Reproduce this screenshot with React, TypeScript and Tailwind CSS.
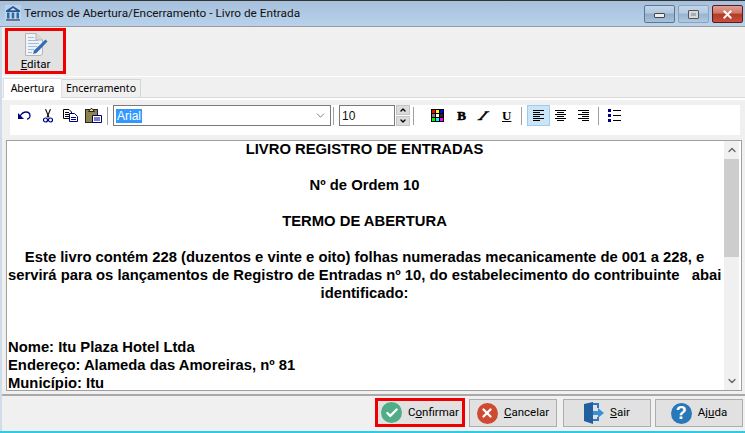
import React from 'react';
import { ChevronDown, ChevronUp, Check, X } from 'lucide-react';

function BankIcon() {
  return (
    <svg width="16" height="17" viewBox="0 0 16 17" className="shrink-0">
      <rect x="0" y="0" width="16" height="17" fill="#c9dcef" opacity="0.6" />
      <path d="M8 1 L15 5.5 V7 H1 V5.5 Z" fill="#235a93" />
      <path d="M8 3 L11 5.3 H5 Z" fill="#d9e6f3" />
      <rect x="2" y="7.5" width="2.5" height="6" fill="#2a6aa6" />
      <rect x="6.7" y="7.5" width="2.5" height="6" fill="#2a6aa6" />
      <rect x="11.5" y="7.5" width="2.5" height="6" fill="#2a6aa6" />
      <rect x="1" y="14" width="14" height="2" fill="#66778c" />
    </svg>
  );
}

function EditIcon() {
  return (
    <svg width="24" height="23" viewBox="0 0 24 23" className="shrink-0">
      <path d="M1.5 0.5 H12 L18.5 7 V20 Q18.5 22.5 16 22.5 H1.5 Z" fill="#f2f2f2" stroke="#b5b5b5" />
      <path d="M12 0.5 V7 H18.5" fill="#d9d9d9" stroke="#b5b5b5" />
      <g stroke="#9dbde3">
        <path d="M4 4.5 H10" />
        <path d="M4 7.5 H14" />
        <path d="M4 10.5 H15" />
        <path d="M4 13.5 H13" />
        <path d="M4 16.5 H10" />
        <path d="M4 19.5 H8" />
      </g>
      <path d="M10 17.5 L21.5 6.5 L23.5 8.5 L12.5 20 L9 21 Z" fill="#2f6db5" />
    </svg>
  );
}

function UndoIcon() {
  return (
    <svg width="13" height="10" viewBox="0 0 13 10" fill="none" className="shrink-0">
      <path d="M0 2 V8 H6 Z" fill="#000080" />
      <path d="M2 5 C4 2 6 1 8 1 C11 1 12 3 12 5 C12 7 10 8 9 8" stroke="#000080" strokeWidth="1.3" />
    </svg>
  );
}

function ScissorsIcon() {
  return (
    <svg width="10" height="14" viewBox="0 0 10 14" fill="none" className="shrink-0">
      <path d="M2.5 0 L6 8.5" stroke="#111" strokeWidth="1.1" />
      <path d="M7.5 0 L4 8.5" stroke="#111" strokeWidth="1.1" />
      <circle cx="2.5" cy="11" r="2" stroke="#000080" strokeWidth="1.2" />
      <circle cx="7.5" cy="11" r="2" stroke="#000080" strokeWidth="1.2" />
    </svg>
  );
}

function CopyIcon() {
  return (
    <svg width="15" height="13" viewBox="0 0 15 13" fill="#fff" className="shrink-0">
      <path d="M0.5 0.5 H6 L8.5 3 V9.5 H0.5 Z" stroke="#000" />
      <path d="M2 3.5 H6 M2 5.5 H6 M2 7.5 H6" stroke="#000" />
      <path d="M6.5 4.5 H11.5 L14.5 7.5 V12.5 H6.5 Z" stroke="#000080" />
      <path d="M8 8.5 H13 M8 10.5 H13" stroke="#000080" />
    </svg>
  );
}

function PasteIcon() {
  return (
    <svg width="17" height="15" viewBox="0 0 17 15" className="shrink-0">
      <rect x="0.5" y="1.5" width="12" height="13" fill="#8c8450" stroke="#222" />
      <path d="M3.5 3.5 L6 0.5 H7 L9.5 3.5 Z" fill="#f6e27a" stroke="#222" />
      <path d="M7.5 7.5 H16.5 V14.5 H7.5 Z" fill="#fff" stroke="#000080" />
      <path d="M9 10 H15 M9 12 H15" stroke="#000080" />
    </svg>
  );
}

function ColorGrid() {
  const cols = ['#ff0000', '#ffff00', '#0000ff', '#808080', '#ffffff', '#222222', '#00ff00', '#00ffff', '#ff00ff'];
  return (
    <div className="grid grid-cols-3 gap-px bg-black p-px w-[13px] h-[13px] shrink-0">
      {cols.map((c, i) => (
        <span key={i} className="block w-[3px] h-[3px]" style={{ backgroundColor: c }} />
      ))}
    </div>
  );
}

function AlignIcon({ kind }: { kind: 'left' | 'center' | 'right' }) {
  const rows = {
    left: ['M0 0.5H11', 'M0 2.5H7', 'M0 4.5H11', 'M0 6.5H7', 'M0 8.5H11', 'M0 10.5H7'],
    center: ['M0 0.5H11', 'M2 2.5H9', 'M0 4.5H11', 'M2 6.5H9', 'M0 8.5H11', 'M2 10.5H9'],
    right: ['M0 0.5H11', 'M4 2.5H11', 'M0 4.5H11', 'M4 6.5H11', 'M0 8.5H11', 'M4 10.5H11'],
  };
  return (
    <svg width="11" height="11" viewBox="0 0 11 11" stroke="#000" className="shrink-0">
      {rows[kind].map((d) => (
        <path key={d} d={d} />
      ))}
    </svg>
  );
}

function ListIcon() {
  return (
    <svg width="13" height="13" viewBox="0 0 13 13" className="shrink-0">
      <rect x="0" y="0" width="3" height="3" fill="#000080" />
      <rect x="0" y="5" width="3" height="3" fill="#000080" />
      <rect x="0" y="10" width="3" height="3" fill="#000080" />
      <path d="M5 1.5H13 M5 6.5H13 M5 11.5H13" stroke="#000" />
    </svg>
  );
}

function ExitIcon() {
  return (
    <svg width="20" height="22" viewBox="0 0 20 22" className="shrink-0">
      <path d="M0 2 L9 0 V22 L0 19 Z" fill="#215f9e" />
      <path d="M9 1 H15 V6 H13 V3 H9 Z" fill="#2f78bd" />
      <path d="M9 17 H13 V15 H15 V19 H9 Z" fill="#2f78bd" />
      <path d="M9 9 H14 V6 L20 11 L14 16 V13 H9 Z" fill="#3a90d8" />
    </svg>
  );
}

function Sep({ ml }: { ml: string }) {
  return <div className={`w-px h-[18px] bg-[#a0a0a0] shrink-0 ${ml}`} />;
}

function FooterButton({
  icon,
  pre,
  u,
  post,
  w,
  marked,
}: {
  icon: React.ReactNode;
  pre: string;
  u: string;
  post: string;
  w: string;
  marked?: boolean;
}) {
  return (
    <button
      className={`flex items-center justify-center gap-[6px] bg-[#e1e1e1] text-[11.5px] text-black ${w} ${
        marked ? 'h-[29px] -mt-px border-[3px] border-[#ee0000]' : 'h-[28px] border border-[#adadad]'
      }`}
    >
      {icon}
      <span>
        {pre}
        <span className="underline">{u}</span>
        {post}
      </span>
    </button>
  );
}

const lines = [
  { t: 'LIVRO REGISTRO DE ENTRADAS', c: true },
  { t: '', c: true },
  { t: 'Nº de Ordem 10', c: true },
  { t: '', c: true },
  { t: 'TERMO DE ABERTURA', c: true },
  { t: '', c: true },
  { t: 'Este livro contém 228 (duzentos e vinte e oito) folhas numeradas mecanicamente de 001 a 228, e', c: true },
  { t: 'servirá para os lançamentos de Registro de Entradas nº 10, do estabelecimento do contribuinte\u00a0\u00a0\u00a0abai', c: false },
  { t: 'identificado:', c: true },
  { t: '', c: false },
  { t: '', c: false },
  { t: 'Nome: Itu Plaza Hotel Ltda', c: false },
  { t: 'Endereço: Alameda das Amoreiras, nº 81', c: false },
  { t: 'Município: Itu', c: false },
];

export default function App() {
  return (
    <div className="w-[745px] h-[433px] flex flex-col overflow-hidden bg-[#f0f0f0] text-[12px] text-black font-['Roboto',sans-serif]">
      <div className="h-px bg-[#333] shrink-0" />
      {/* title bar */}
      <div className="h-[26px] shrink-0 flex items-center pl-[5px] pr-[2px] gap-[3px] bg-gradient-to-b from-[#a6bfdb] to-[#b9d2ec] border-b border-[#9a9a9a]">
        <BankIcon />
        <span className="text-[11.8px] text-[#111] flex-1 leading-none">Termos de Abertura/Encerramento - Livro de Entrada</span>
        <div className="flex gap-[3px] self-start mt-[4px]">
          <div className="w-[31px] h-[18px] rounded-[2px] border border-[#5f7690] bg-[linear-gradient(#c3d5e9_0%,#aec6df_45%,#8fabc8_50%,#a9c2dc_100%)] flex items-center justify-center">
            <div className="w-[11px] h-[5px] bg-[#eee] border border-[#444] rounded-[1px] mt-[3px]" />
          </div>
          <div className="w-[31px] h-[18px] rounded-[2px] border border-[#8da3bd] bg-[linear-gradient(#c3d5e9_0%,#b3cae2_45%,#98b3d0_50%,#b0c8e1_100%)] flex items-center justify-center">
            <div className="w-[11px] h-[9px] bg-[#d8d8d8] border border-[#555] rounded-[1px] flex items-center justify-center">
              <div className="w-[5px] h-[3px] bg-[#9db0c6]" />
            </div>
          </div>
          <div className="w-[31px] h-[18px] rounded-[2px] border border-[#5a1a22] bg-[linear-gradient(#e0a093_0%,#cf7668_45%,#b33a24_50%,#c8503a_100%)] flex items-center justify-center">
            <X size={13} strokeWidth={3.5} className="text-white" />
          </div>
        </div>
      </div>

      <div className="flex-1 min-h-0 flex flex-col border-l-2 border-[#cfdcea]">
        {/* toolbar */}
        <div className="h-[50px] shrink-0 pl-[3px] pt-px border-b border-white">
          <div className="w-[61px] h-[46px] bg-[#e2e2e2] border-[3px] border-[#ee0000] flex flex-col items-center pt-[2px]">
            <EditIcon />
            <span className="text-[11.5px] leading-[14px] mt-[1px]">
              <span className="underline">E</span>ditar
            </span>
          </div>
        </div>

        {/* tabs */}
        <div className="h-[20px] shrink-0 flex items-end pl-px mt-[1px] relative z-10 font-['Noto_Sans',sans-serif]">
          <div className="h-[20px] w-[59px] bg-white flex items-center justify-center text-[10.5px] border-t border-x border-[#e0e0e0]">Abertura</div>
          <div className="h-[18px] w-[79px] bg-[#f0f0f0] flex items-center justify-center text-[10.5px] border-t border-r border-[#d4d4d4] mb-px">Encerramento</div>
        </div>

        {/* page */}
        <div className="flex-1 min-h-0 flex flex-col border-t border-[#d9d9d9] -mt-px">
          <div className="h-[2px] shrink-0 bg-white" />
          <div className="ml-[8px] mr-[5px] mt-[5px] h-[30px] shrink-0 bg-white flex items-start">
            <div className="h-[21px] flex items-center">
              <div className="ml-[8px]"><UndoIcon /></div>
              <div className="ml-[12px]"><ScissorsIcon /></div>
              <div className="ml-[10px]"><CopyIcon /></div>
              <div className="ml-[7px]"><PasteIcon /></div>
              <Sep ml="ml-[5px]" />
              <div className="ml-[5px] w-[218px] h-[21px] shrink-0 border border-[#7a7a7a] flex items-center pl-[2px] justify-between pr-[2px]">
                <span className="bg-[#3399ff] text-white text-[12px] leading-[14px] px-px font-['Liberation_Sans',sans-serif]">Arial</span>
                <ChevronDown size={13} strokeWidth={1.5} className="text-[#666] mr-px" />
              </div>
              <Sep ml="ml-[2px]" />
              <div className="ml-[5px] w-[56px] h-[21px] shrink-0 border border-[#7a7a7a] flex items-center pl-[2px] text-[12px] text-[#111] font-['Liberation_Sans',sans-serif]">10</div>
              <div className="ml-px w-[14px] h-[21px] shrink-0 flex flex-col gap-px">
                <div className="h-[10px] bg-[#dcdcdc] border border-[#c4c4c4] flex items-center justify-center">
                  <ChevronUp size={8} strokeWidth={4} />
                </div>
                <div className="h-[10px] bg-[#dcdcdc] border border-[#c4c4c4] flex items-center justify-center">
                  <ChevronDown size={8} strokeWidth={4} />
                </div>
              </div>
              <Sep ml="ml-[3px]" />
              <div className="ml-[17px]"><ColorGrid /></div>
              <span className="ml-[13px] w-[9px] text-center font-['Liberation_Serif',serif] font-bold text-[13px] leading-none [-webkit-text-stroke:0.6px_#000]">B</span>
              <span className="ml-[11px] w-[13px] text-center font-['Liberation_Serif',serif] font-bold italic text-[13px] leading-none -skew-x-[35deg] [-webkit-text-stroke:0.5px_#000]">I</span>
              <span className="ml-[12px] w-[9px] text-center font-['Liberation_Serif',serif] font-bold underline text-[13px] leading-none">U</span>
              <Sep ml="ml-[10px]" />
              <div className="ml-[5px] w-[23px] h-[21px] shrink-0 bg-[#cce4f7] border border-[#99cdf2] flex items-center justify-center">
                <AlignIcon kind="left" />
              </div>
              <div className="ml-[5px]"><AlignIcon kind="center" /></div>
              <div className="ml-[12px]"><AlignIcon kind="right" /></div>
              <Sep ml="ml-[9px]" />
              <div className="ml-[9px]"><ListIcon /></div>
            </div>
          </div>

          {/* editor */}
          <div className="ml-[4px] mr-[3px] mt-[5px] h-[251px] shrink-0 flex bg-white border border-[#a0a0a0] overflow-hidden">
            <div className="flex-1 min-w-0 overflow-hidden pl-px pr-[3px] font-bold text-[14.8px] leading-[18px] font-['Liberation_Sans',sans-serif]">
              <div className="-mt-px">
                {lines.map((l, i) => (
                  <div key={i} className={`h-[18px] whitespace-nowrap ${l.c ? 'text-center' : ''}`}>
                    {l.t}
                  </div>
                ))}
              </div>
            </div>
            <div className="w-[15px] shrink-0 mr-[2px] bg-[#f0f0f0] flex flex-col items-center">
              <div className="h-[18px] flex items-center justify-center">
                <ChevronUp size={12} strokeWidth={2.5} className="text-[#606060]" />
              </div>
              <div className="w-[15px] h-[98px] bg-[#cdcdcd]" />
              <div className="flex-1" />
              <div className="h-[18px] flex items-center justify-center">
                <ChevronDown size={12} strokeWidth={2.5} className="text-[#606060]" />
              </div>
            </div>
          </div>

          {/* footer */}
          <div className="mt-[3px] border-t-2 border-[#a9a9a9] flex-1 flex items-start justify-end pt-[3px] pr-[2px]">
            <FooterButton
              marked
              w="w-[90px]"
              pre="C"
              u="o"
              post="nfirmar"
              icon={
                <div className="w-[21px] h-[21px] rounded-full bg-[#50ad85] flex items-center justify-center">
                  <Check size={14} strokeWidth={4} className="text-white" />
                </div>
              }
            />
            <div className="ml-[4px]">
              <FooterButton
                w="w-[88px]"
                pre=""
                u="C"
                post="ancelar"
                icon={
                  <div className="w-[21px] h-[21px] rounded-full bg-[#cf4a32] flex items-center justify-center">
                    <X size={14} strokeWidth={4} className="text-white" />
                  </div>
                }
              />
            </div>
            <div className="ml-[6px]">
              <FooterButton w="w-[88px]" pre="" u="S" post="air" icon={<ExitIcon />} />
            </div>
            <div className="ml-[4px]">
              <FooterButton
                w="w-[88px]"
                pre="Aj"
                u="u"
                post="da"
                icon={
                  <div className="w-[21px] h-[21px] rounded-full bg-[#2878b8] flex items-center justify-center text-white font-bold text-[18px] leading-none font-['Liberation_Sans',sans-serif]">
                    ?
                  </div>
                }
              />
            </div>
          </div>
        </div>
      </div>
      <div className="h-[2px] shrink-0 bg-[#2ccbe8]" />
    </div>
  );
}
